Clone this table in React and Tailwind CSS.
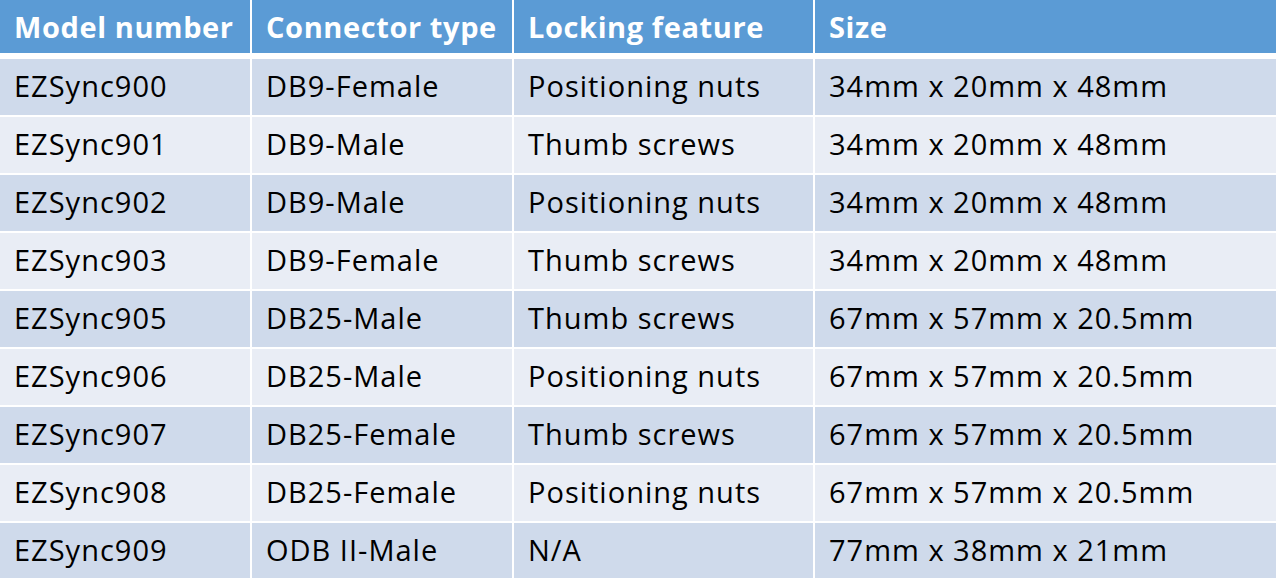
import React from 'react';

const rows = [
    ['EZSync900', 'DB9-Female', 'Positioning nuts', '34mm x 20mm x 48mm'],
    ['EZSync901', 'DB9-Male', 'Thumb screws', '34mm x 20mm x 48mm'],
    ['EZSync902', 'DB9-Male', 'Positioning nuts', '34mm x 20mm x 48mm'],
    ['EZSync903', 'DB9-Female', 'Thumb screws', '34mm x 20mm x 48mm'],
    ['EZSync905', 'DB25-Male', 'Thumb screws', '67mm x 57mm x 20.5mm'],
    ['EZSync906', 'DB25-Male', 'Positioning nuts', '67mm x 57mm x 20.5mm'],
    ['EZSync907', 'DB25-Female', 'Thumb screws', '67mm x 57mm x 20.5mm'],
    ['EZSync908', 'DB25-Female', 'Positioning nuts', '67mm x 57mm x 20.5mm'],
    ['EZSync909', 'ODB II-Male', 'N/A', '77mm x 38mm x 21mm'],
];

const headers = ['Model number', 'Connector type', 'Locking feature', 'Size'];

const cols = 'grid grid-cols-[250px_260px_299px_1fr] gap-x-[2px]';

export default function App() {
    return (
        <div className="w-[1276px] h-[578px] overflow-hidden bg-white font-['Open_Sans',sans-serif] text-[29px] tracking-[1px] leading-none">
            {/* Header */}
            <div className={`${cols} h-[53px] mb-[6px]`}>
                {headers.map((h) => (
                    <div key={h} className="bg-[#5b9bd5] text-white font-bold tracking-[0.6px] flex items-center px-[14px]">
                        {h}
                    </div>
                ))}
            </div>

            {/* Body */}
            <div className="flex flex-col gap-y-[2px]">
                {rows.map((r, i) => (
                    <div key={r[0]} className={`${cols} h-[56px]`}>
                        {r.map((c, j) => (
                            <div
                                key={j}
                                className={`flex items-center px-[14px] pb-[3px] text-black ${i % 2 === 0 ? 'bg-[#cfdaeb]' : 'bg-[#e9edf5]'}`}
                            >
                                {c}
                            </div>
                        ))}
                    </div>
                ))}
            </div>
        </div>
    );
}
